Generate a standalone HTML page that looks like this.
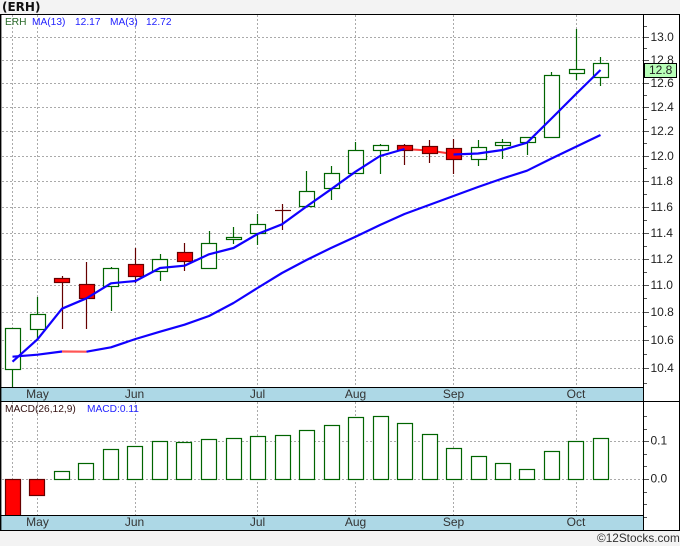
<!DOCTYPE html>
<html><head><meta charset="utf-8">
<style>
html,body{margin:0;padding:0;background:#f3f3f3}
body{width:680px;height:546px;overflow:hidden}
svg{display:block}
text{font-family:"Liberation Sans",sans-serif}
.ax{font-size:12px;fill:#222}
.mo{font-size:12px;fill:#333;text-anchor:middle}
.lg{font-size:10.2px}
.g{stroke:#aaa;stroke-width:1;stroke-dasharray:2 2;fill:none}
.t{stroke:#555;stroke-width:1}
.up{fill:#fff;stroke:#006400;stroke-width:1.2}
.dn{fill:#f00;stroke:#600;stroke-width:1.2}
.wu{stroke:#006400;stroke-width:1.2}
.wd{stroke:#600;stroke-width:1.2}
.ma{fill:none;stroke:#10f;stroke-width:2.2;stroke-linejoin:round}
</style></head><body>
<svg width="680" height="546" viewBox="0 0 680 546" xmlns="http://www.w3.org/2000/svg">
<rect width="680" height="546" fill="#f3f3f3"/>
<rect x="0" y="14" width="680" height="516" fill="#fff"/>
<text x="2" y="11" style="font-family:'DejaVu Sans',sans-serif;font-size:12px;font-weight:bold" fill="#111">(ERH)</text>

<!-- grid price -->
<path class="g" d="M2 37.5H644M2 60.5H644M2 83.5H644M2 107.5H644M2 131.5H644M2 156.5H644M2 181.5H644M2 207.5H644M2 233.5H644M2 259.5H644M2 285.5H644M2 312.5H644M2 340.5H644M2 368.5H644"/>
<path class="g" d="M12.5 15V387M37.5 15V387M135.5 15V387M257.5 15V387M355.5 15V387M453.5 15V387M576.5 15V387"/>
<!-- grid macd -->
<path class="g" d="M2 441.5H644M2 479.5H644"/>
<path class="g" d="M12.5 402V515M37.5 402V515M135.5 402V515M257.5 402V515M355.5 402V515M453.5 402V515M576.5 402V515"/>

<!-- wicks -->
<path class="wu" d="M12.5 328V387M37.5 297V340M111.5 267V311M160.5 254V281M209.5 231V268M233.5 227V244M257.5 214V245M306.5 171V206M331.5 166V200M355.5 142V173M380.5 144V174M478.5 140V166M502.5 139V159M527.5 137V155M551.5 72V137M576.5 29V80M600.5 57V86"/>
<path class="wd" d="M62.5 276V329M86.5 262V329M135.5 248V283M184.5 243V271M282.5 204V230M404.5 144V165M429.5 140V163M453.5 139V174"/>

<!-- bodies -->
<g class="up">
<rect x="5.5" y="328.5" width="15" height="41"/>
<rect x="30.5" y="314.5" width="15" height="15"/>
<rect x="103.5" y="268.5" width="15" height="18"/>
<rect x="152.5" y="259.5" width="15" height="12"/>
<rect x="201.5" y="243.5" width="15" height="25"/>
<rect x="226.5" y="237.5" width="15" height="2"/>
<rect x="250.5" y="224.5" width="15" height="9"/>
<rect x="299.5" y="191.5" width="15" height="15"/>
<rect x="324.5" y="173.5" width="15" height="15"/>
<rect x="348.5" y="150.5" width="15" height="23"/>
<rect x="373.5" y="145.5" width="15" height="5"/>
<rect x="471.5" y="147.5" width="15" height="12"/>
<rect x="495.5" y="142.5" width="15" height="3"/>
<rect x="520.5" y="137.5" width="15" height="5"/>
<rect x="544.5" y="75.5" width="15" height="62"/>
<rect x="569.5" y="69.5" width="15" height="4"/>
<rect x="593.5" y="63.5" width="15" height="14"/>
</g>
<path class="wd" d="M275 210.5H291"/>
<path d="M404 149L429 150.5L453 154" fill="none" stroke="#f33" stroke-width="2"/>
<g class="dn">
<rect x="54.5" y="278.5" width="15" height="4"/>
<rect x="79.5" y="284.5" width="15" height="14"/>
<rect x="128.5" y="264.5" width="15" height="12"/>
<rect x="177.5" y="252.5" width="15" height="9"/>
<rect x="397.5" y="145.5" width="15" height="5"/>
<rect x="422.5" y="146.5" width="15" height="7"/>
<rect x="446.5" y="148.5" width="15" height="11"/>
</g>

<!-- MA lines -->
<polyline class="ma" points="12.5,361.7 37.5,339.3 62,308.7 86.5,298.3 111,283.3 135.5,281 160,268 184.5,265.7 209,254.3 233.5,248 257.5,234 282,224.3 306.5,206.5 331,189.3 355.5,171.7 380,156 404.5,149"/>
<polyline class="ma" points="453.5,154.5 478,153.5 502.5,150 527,142.7 551.5,118.5 576,94 600.5,70"/>
<polyline class="ma" points="12.5,356.7 37.5,354.7 62,351.5"/>
<polyline fill="none" stroke="#f55" stroke-width="2.2" points="62,351.5 86.5,351.7"/>
<polyline class="ma" points="86.5,351.7 111,347.3 135.5,339 160,331.7 184.5,324.7 209,316 233.5,303 257.5,288 282,273 306.5,260 331,248 355.5,236.7 380,225 404.5,214 429,205 453.5,196 478,187 502.5,178.5 527,170.7 551.5,158.5 576,146.7 600.5,135"/>

<!-- MACD bars -->
<g class="up">
<rect x="54.5" y="471.5" width="15" height="8"/>
<rect x="78.5" y="463.5" width="15" height="16"/>
<rect x="103.5" y="449.5" width="15" height="30"/>
<rect x="127.5" y="446.5" width="15" height="33"/>
<rect x="152.5" y="441.5" width="15" height="38"/>
<rect x="176.5" y="442.5" width="15" height="37"/>
<rect x="201.5" y="439.5" width="15" height="40"/>
<rect x="226.5" y="438.5" width="15" height="41"/>
<rect x="250.5" y="436.5" width="15" height="43"/>
<rect x="275.5" y="435.5" width="15" height="44"/>
<rect x="299.5" y="430.5" width="15" height="49"/>
<rect x="324.5" y="425.5" width="15" height="54"/>
<rect x="348.5" y="417.5" width="15" height="62"/>
<rect x="373.5" y="416.5" width="15" height="63"/>
<rect x="397.5" y="423.5" width="15" height="56"/>
<rect x="422.5" y="434.5" width="15" height="45"/>
<rect x="446.5" y="448.5" width="15" height="31"/>
<rect x="471.5" y="456.5" width="15" height="23"/>
<rect x="495.5" y="463.5" width="15" height="16"/>
<rect x="519.5" y="469.5" width="15" height="10"/>
<rect x="544.5" y="451.5" width="15" height="28"/>
<rect x="568.5" y="441.5" width="15" height="38"/>
<rect x="593.5" y="438.5" width="15" height="41"/>
</g>
<g class="dn">
<rect x="5.5" y="479.5" width="15" height="37"/>
<rect x="29.5" y="479.5" width="15" height="16"/>
</g>

<!-- bands -->
<rect x="1" y="388" width="643" height="13" fill="#add8e6"/>
<rect x="1" y="516" width="643" height="14" fill="#add8e6"/>
<path d="M0 387.5H644M0 401.5H680M0 515.5H644M0 530.5H680M0 14.5H680" stroke="#000" stroke-width="1"/>
<path d="M679.5 14V531M643.5 14V531" stroke="#000" stroke-width="1"/>
<rect x="0" y="14" width="1.4" height="517" fill="#000"/>

<!-- month labels -->
<g class="mo">
<text x="37.5" y="398" class="mo">May</text><text x="134.5" y="398" class="mo">Jun</text><text x="257.5" y="398" class="mo">Jul</text><text x="355.5" y="398" class="mo">Aug</text><text x="453.5" y="398" class="mo">Sep</text><text x="576" y="398" class="mo">Oct</text>
<text x="37.5" y="526" class="mo">May</text><text x="134.5" y="526" class="mo">Jun</text><text x="257.5" y="526" class="mo">Jul</text><text x="355.5" y="526" class="mo">Aug</text><text x="453.5" y="526" class="mo">Sep</text><text x="576" y="526" class="mo">Oct</text>
</g>

<!-- ticks -->
<path class="t" d="M644 26.5H647M644 37.5H649M644 48.5H647M644 60.5H649M644 72.5H647M644 83.5H649M644 95.5H647M644 107.5H649M644 119.5H647M644 131.5H649M644 143.5H647M644 156.5H649M644 168.5H647M644 181.5H649M644 194.5H647M644 207.5H649M644 220.5H647M644 233.5H649M644 246.5H647M644 259.5H649M644 272.5H647M644 285.5H649M644 298.5H647M644 312.5H649M644 326.5H647M644 340.5H649M644 354.5H647M644 368.5H649M644 383.5H647"/>
<path class="t" d="M644 416.5H647M644 429.5H647M644 441.5H649M644 454.5H647M644 466.5H647M644 479.5H649M644 492.5H647M644 504.5H647M644 517.5H647"/>

<!-- axis labels -->
<g class="ax">
<text class="ax" x="650.5" y="41">13.0</text>
<text class="ax" x="650.5" y="64">12.8</text>
<text class="ax" x="650.5" y="87">12.6</text>
<text class="ax" x="650.5" y="111">12.4</text>
<text class="ax" x="650.5" y="135">12.2</text>
<text class="ax" x="650.5" y="160">12.0</text>
<text class="ax" x="650.5" y="185">11.8</text>
<text class="ax" x="650.5" y="211">11.6</text>
<text class="ax" x="650.5" y="237">11.4</text>
<text class="ax" x="650.5" y="263">11.2</text>
<text class="ax" x="650.5" y="289">11.0</text>
<text class="ax" x="650.5" y="316">10.8</text>
<text class="ax" x="650.5" y="344">10.6</text>
<text class="ax" x="650.5" y="372">10.4</text>
<text class="ax" x="650.5" y="444.5">0.1</text>
<text class="ax" x="650.5" y="482.5">0.0</text>
</g>
<rect x="644.5" y="63.5" width="32" height="14" fill="#b8ffb8" stroke="#000"/>
<text class="ax" x="649" y="74">12.8</text>

<!-- legends -->
<text class="lg" x="5" y="25" fill="#2a6a2a">ERH</text>
<text class="lg" x="32" y="25" fill="#22f">MA(13)</text>
<text class="lg" x="75" y="25" fill="#22f">12.17</text>
<text class="lg" x="110" y="25" fill="#22f">MA(3)</text>
<text class="lg" x="146" y="25" fill="#22f">12.72</text>
<text class="lg" x="5" y="412" fill="#311">MACD(26,12,9)</text>
<text class="lg" x="87" y="412" fill="#22f">MACD:0.11</text>

<text x="597" y="542" style="font-size:11.8px" fill="#333">©12Stocks.com</text>
</svg>
</body></html>
